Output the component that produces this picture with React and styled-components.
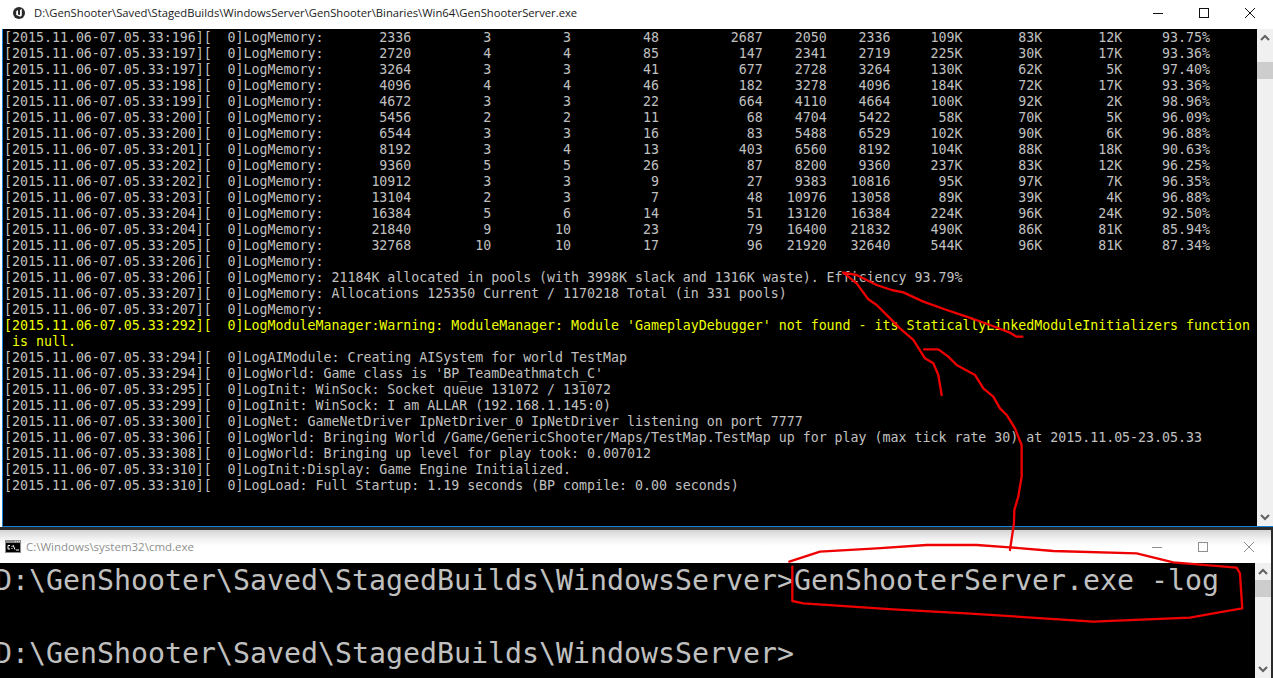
import React from "react";
import styled, { createGlobalStyle } from "styled-components";

const GlobalStyle = createGlobalStyle`
  html, body {
    margin: 0;
    padding: 0;
    background: #000;
  }
`;

const Page = styled.div`
  position: relative;
  width: 1273px;
  height: 678px;
  overflow: hidden;
  display: flex;
  flex-direction: column;
  background: #2b2b2b;
`;

const ServerWindow = styled.div`
  height: 527px;
  display: flex;
  flex-direction: column;
  padding-left: 2px;
  background: #fff;
  flex: none;
`;

const TitleBar = styled.div`
  height: ${(props) => props.$height}px;
  box-sizing: border-box;
  flex: none;
  display: flex;
  align-items: center;
  padding-left: ${(props) => props.$pad}px;
  padding-bottom: ${(props) => props.$lift || 0}px;
  background: ${(props) =>
    props.$faded
      ? "linear-gradient(#d4d4d4 0, #f2f2f2 9px, #fff 16px)"
      : "#fff"};
`;

const AppIcon = styled.svg`
  flex: none;
  display: block;
`;

const TitleText = styled.span`
  flex: 1;
  font-family: "Open Sans", sans-serif;
  font-size: ${(props) => props.$size}px;
  white-space: nowrap;
  color: ${(props) => (props.$faded ? "#8f8f8f" : "#1a1a1a")};
  margin-left: ${(props) => props.$gap}px;
`;

const Controls = styled.div`
  display: flex;
  flex: none;
  margin-right: ${(props) => props.$right}px;
`;

const ControlButton = styled.svg`
  display: block;
  width: 46px;
  height: 12px;
`;

const TerminalRow = styled.div`
  flex: 1;
  min-height: 0;
  display: flex;
  ${(props) =>
    props.$framed &&
    `
    border-left: 1px solid #1883d7;
    border-bottom: 1px solid #1883d7;
  `}
`;

const LogPane = styled.div`
  flex: 1;
  min-width: 0;
  overflow: hidden;
  background: #000;
  padding: 1px 0 0 1px;
`;

const LogLine = styled.div`
  height: 16px;
  font-family: "DejaVu Sans Mono", monospace;
  font-size: 13.28px;
  line-height: 16px;
  white-space: pre;
  color: ${(props) => (props.$warn ? "#eeff00" : "#c0c0c0")};
`;

const Scrollbar = styled.div`
  width: 16px;
  flex: none;
  display: flex;
  flex-direction: column;
  align-items: center;
  justify-content: space-between;
  background: #f0f0f0;
  position: relative;
`;

const Arrow = styled.svg`
  display: block;
  width: 16px;
  height: 17px;
  flex: none;
`;

const Thumb = styled.div`
  position: absolute;
  left: 0;
  right: 0;
  top: ${(props) => props.$top}px;
  height: 17px;
  background: #cdcdcd;
`;

const Gap = styled.div`
  height: 3px;
  flex: none;
  background: #2b2b2b;
`;

const CmdWindow = styled.div`
  flex: 1;
  min-height: 0;
  display: flex;
  flex-direction: column;
  padding-right: 2px;
`;

const CmdPane = styled.div`
  flex: 1;
  min-width: 0;
  overflow: hidden;
  background: #000;
`;

const CmdLine = styled.div`
  height: 36.5px;
  margin-left: -5px;
  font-family: "DejaVu Sans Mono", monospace;
  font-size: 28.24px;
  line-height: 36.5px;
  white-space: pre;
  color: #c0c0c0;
`;

const Annotation = styled.svg`
  position: absolute;
  left: 0;
  top: 0;
  pointer-events: none;
`;

const RedPen = styled.g`
  fill: none;
  stroke: #ee0000;
  stroke-width: 7;
  stroke-linejoin: round;
  stroke-linecap: round;
`;

const COLUMN_ENDS = [51, 61, 71, 82, 95, 103, 111, 120, 130, 140, 151];

const TABLE = [
  ["196", "2336 3 3 48 2687 2050 2336 109K 83K 12K 93.75%"],
  ["197", "2720 4 4 85 147 2341 2719 225K 30K 17K 93.36%"],
  ["197", "3264 3 3 41 677 2728 3264 130K 62K 5K 97.40%"],
  ["198", "4096 4 4 46 182 3278 4096 184K 72K 17K 93.36%"],
  ["199", "4672 3 3 22 664 4110 4664 100K 92K 2K 98.96%"],
  ["200", "5456 2 2 11 68 4704 5422 58K 70K 5K 96.09%"],
  ["200", "6544 3 3 16 83 5488 6529 102K 90K 6K 96.88%"],
  ["201", "8192 3 4 13 403 6560 8192 104K 88K 18K 90.63%"],
  ["202", "9360 5 5 26 87 8200 9360 237K 83K 12K 96.25%"],
  ["202", "10912 3 3 9 27 9383 10816 95K 97K 7K 96.35%"],
  ["203", "13104 2 3 7 48 10976 13058 89K 39K 4K 96.88%"],
  ["204", "16384 5 6 14 51 13120 16384 224K 96K 24K 92.50%"],
  ["204", "21840 9 10 23 79 16400 21832 490K 86K 81K 85.94%"],
  ["205", "32768 10 10 17 96 21920 32640 544K 96K 81K 87.34%"],
];

const prefix = (ms) => `[2015.11.06-07.05.33:${ms}][  0]`;

const tableLine = ([ms, cells]) => {
  let line = prefix(ms) + "LogMemory:";
  cells.split(" ").forEach((cell, i) => {
    line += cell.padStart(COLUMN_ENDS[i] - line.length);
  });
  return line;
};

const LOG = [
  ...TABLE.map((row) => ({ text: tableLine(row) })),
  { text: prefix("206") + "LogMemory:" },
  {
    text:
      prefix("206") +
      "LogMemory: 21184K allocated in pools (with 3998K slack and 1316K waste). Efficiency 93.79%",
  },
  {
    text:
      prefix("207") +
      "LogMemory: Allocations 125350 Current / 1170218 Total (in 331 pools)",
  },
  { text: prefix("207") + "LogMemory:" },
  {
    warn: true,
    text:
      prefix("292") +
      "LogModuleManager:Warning: ModuleManager: Module 'GameplayDebugger' not found - its StaticallyLinkedModuleInitializers function",
  },
  { warn: true, text: " is null." },
  { text: prefix("294") + "LogAIModule: Creating AISystem for world TestMap" },
  { text: prefix("294") + "LogWorld: Game class is 'BP_TeamDeathmatch_C'" },
  { text: prefix("295") + "LogInit: WinSock: Socket queue 131072 / 131072" },
  { text: prefix("299") + "LogInit: WinSock: I am ALLAR (192.168.1.145:0)" },
  {
    text:
      prefix("300") +
      "LogNet: GameNetDriver IpNetDriver_0 IpNetDriver listening on port 7777",
  },
  {
    text:
      prefix("306") +
      "LogWorld: Bringing World /Game/GenericShooter/Maps/TestMap.TestMap up for play (max tick rate 30) at 2015.11.05-23.05.33",
  },
  { text: prefix("308") + "LogWorld: Bringing up level for play took: 0.007012" },
  { text: prefix("310") + "LogInit:Display: Game Engine Initialized." },
  {
    text:
      prefix("310") +
      "LogLoad: Full Startup: 1.19 seconds (BP compile: 0.00 seconds)",
  },
];

const WindowControls = ({ color, right }) => (
  <Controls $right={right}>
    <ControlButton viewBox="0 0 46 12">
      <path d="M18 6.5H28" stroke={color} strokeWidth="1" />
    </ControlButton>
    <ControlButton viewBox="0 0 46 12">
      <rect x="18.5" y="1.5" width="9" height="9" fill="none" stroke={color} />
    </ControlButton>
    <ControlButton viewBox="0 0 46 12">
      <path d="M18 1L28 11M28 1L18 11" stroke={color} strokeWidth="1" />
    </ControlButton>
  </Controls>
);

const ScrollArrow = ({ up }) => (
  <Arrow viewBox="0 0 16 17">
    <path
      d={up ? "M4 11L8 7L12 11" : "M4 6L8 10L12 6"}
      fill="none"
      stroke="#606060"
      strokeWidth="2"
    />
  </Arrow>
);

const UnrealIcon = () => (
  <AppIcon width="12" height="12" viewBox="0 0 12 12">
    <circle cx="6" cy="6" r="6" fill="#2a2a2a" />
    <path d="M3.2 4.2L5 3V7.4L7 8V3L8.8 1.9V8.4L7.2 9.8L5 8.8L3.2 8Z" fill="#fff" />
  </AppIcon>
);

const CmdIcon = () => (
  <AppIcon width="16" height="13" viewBox="0 0 16 13">
    <rect width="16" height="13" fill="#8a8a8a" />
    <path d="M10 1.5H11M12 1.5H13M14 1.5H15" stroke="#ddd" strokeWidth="1" />
    <rect x="1" y="3" width="14" height="9" fill="#000" />
    <path
      d="M5 5.5H3V9H5M7 6V7M7 8V9M8 5L10 9.5M11 10H14"
      fill="none"
      stroke="#fff"
      strokeWidth="1"
    />
  </AppIcon>
);

const Scribbles = () => (
  <Annotation width="1273" height="678" viewBox="0 0 1273 678">
    <RedPen transform="translate(760 260) scale(0.3333)">
      <path d="M250 38L290 45L350 75L395 90L430 97L490 125L560 150L620 170L690 195L750 218L770 230L787 230" />
      <path d="M250 38L290 70L325 118L350 135L385 170L420 205L460 240L495 295L520 310L535 345L545 405" />
      <path d="M492 268L535 268L565 290L590 315L645 345L670 385L700 410L720 445L740 465L765 505L785 555L785 650L775 710L763 750L762 790L750 870" />
    </RedPen>
    <RedPen transform="translate(760 520) scale(0.3333)">
      <path d="M88 125L180 95L350 85L500 75L650 75L750 82L880 93L1130 100L1240 127L1430 143L1440 160L1447 265L1390 275L1290 293L1000 305L620 280L400 268L130 250L97 243L97 140" />
    </RedPen>
  </Annotation>
);

const App = () => (
  <Page>
    <GlobalStyle />
    <ServerWindow>
      <TitleBar $height={29} $pad={11} $lift={4}>
        <UnrealIcon />
        <TitleText $gap={9} $size={11.24}>
          D:\GenShooter\Saved\StagedBuilds\WindowsServer\GenShooter\Binaries\Win64\GenShooterServer.exe
        </TitleText>
        <WindowControls color="#111" right={0} />
      </TitleBar>
      <TerminalRow $framed>
        <LogPane>
          {LOG.map((line, i) => (
            <LogLine key={i} $warn={line.warn}>
              {line.text}
            </LogLine>
          ))}
        </LogPane>
        <Scrollbar>
          <ScrollArrow up />
          <Thumb $top={33} />
          <ScrollArrow />
        </Scrollbar>
      </TerminalRow>
    </ServerWindow>
    <Gap />
    <CmdWindow>
      <TitleBar $height={33} $pad={5} $faded>
        <CmdIcon />
        <TitleText $gap={5} $size={11.5} $faded>
          C:\Windows\system32\cmd.exe
        </TitleText>
        <WindowControls color="#8f8f8f" right={-1} />
      </TitleBar>
      <TerminalRow>
        <CmdPane>
          <CmdLine>D:\GenShooter\Saved\StagedBuilds\WindowsServer&gt;GenShooterServer.exe -log</CmdLine>
          <CmdLine> </CmdLine>
          <CmdLine>D:\GenShooter\Saved\StagedBuilds\WindowsServer&gt;</CmdLine>
        </CmdPane>
        <Scrollbar>
          <ScrollArrow up />
          <Thumb $top={17} />
          <ScrollArrow />
        </Scrollbar>
      </TerminalRow>
    </CmdWindow>
    <Scribbles />
  </Page>
);

export default App;
